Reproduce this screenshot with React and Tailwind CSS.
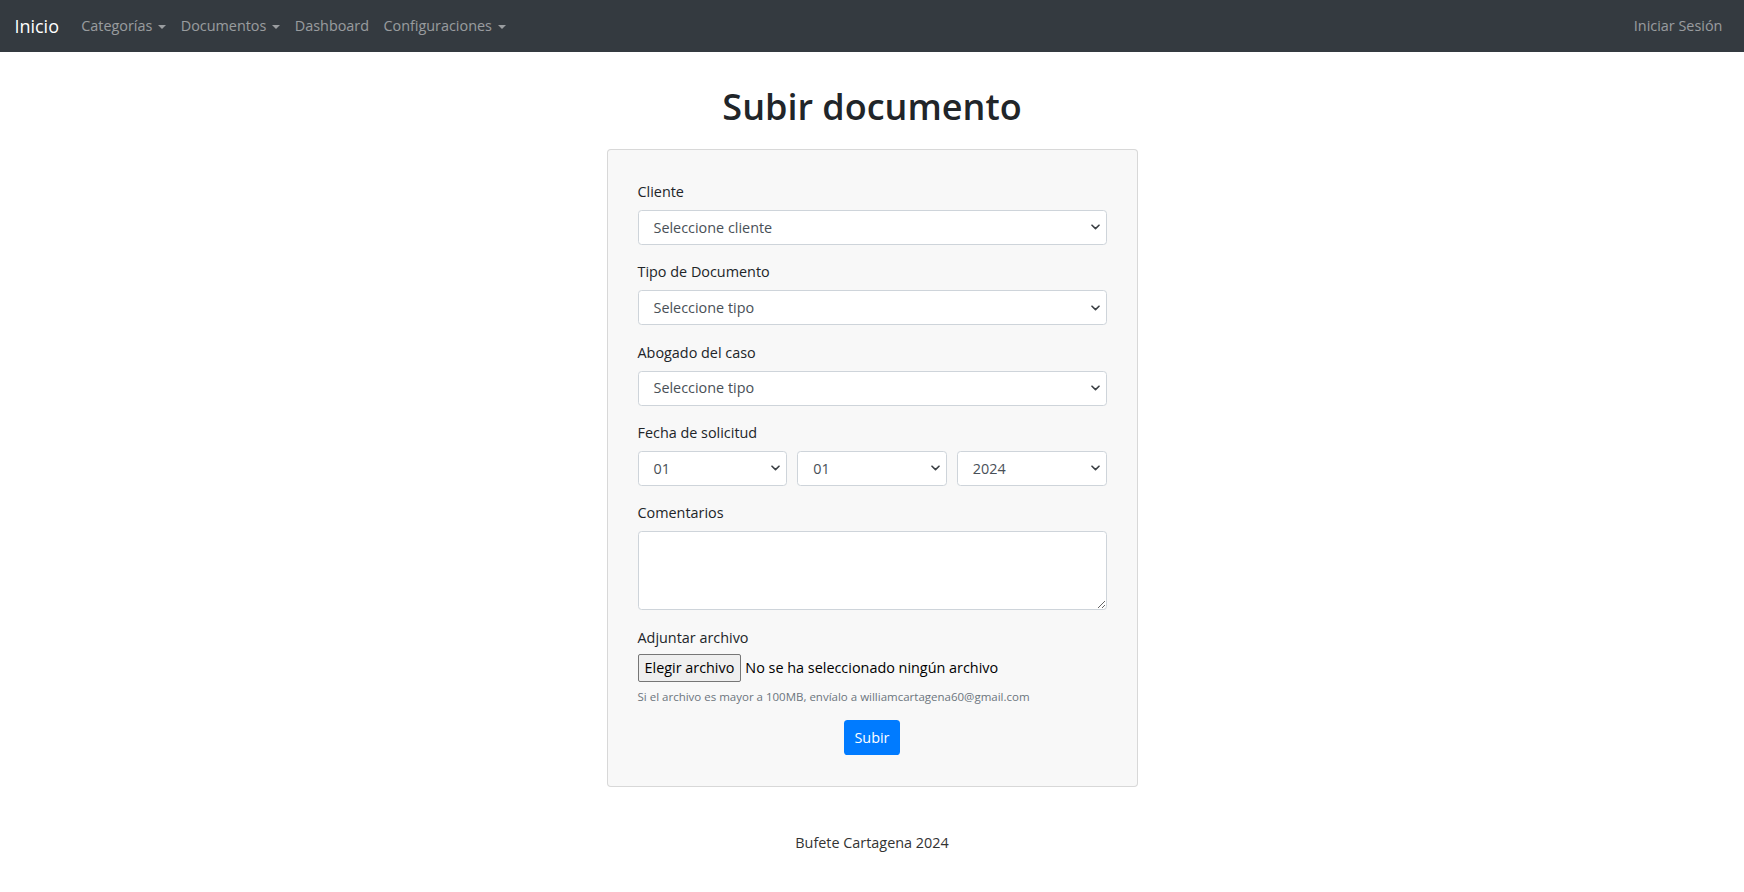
import React from "react";

function Caret() {
  return (
    <span className="inline-block w-0 h-0 ml-[6px] border-x-[4.3px] border-x-transparent border-t-[4.3px] border-t-current align-[2px]" />
  );
}

function Chevron() {
  return (
    <svg width="9" height="6" viewBox="0 0 9 6" className="shrink-0">
      <path d="M1 1.2 L4.5 4.6 L8 1.2" fill="none" stroke="#3c4045" strokeWidth="1.6" strokeLinecap="round" strokeLinejoin="round" />
    </svg>
  );
}

function FakeSelect({ value, className = "" }) {
  return (
    <div className={"h-[35px] bg-white border border-[#ced4da] rounded-[3.6px] flex items-center justify-between pl-[15px] pr-[6px] text-[#495057] " + className}>
      <span>{value}</span>
      <Chevron />
    </div>
  );
}

function Label({ children }) {
  return <div className="leading-[21.6px] mb-[7.2px]">{children}</div>;
}

export default function App() {
  const links = [
    { t: "Categorías", c: true },
    { t: "Documentos", c: true },
    { t: "Dashboard", c: false },
    { t: "Configuraciones", c: true },
  ];
  return (
    <div className="min-h-screen bg-white font-['Open_Sans',sans-serif] text-[14.4px] leading-[1.5] text-[#212529]">
      <nav className="h-[52px] bg-[#343a40] flex items-center justify-between px-[14.4px]">
        <div className="flex items-center">
          <a className="text-[18px] text-white mr-[15px] leading-[27px]">Inicio</a>
          <ul className="flex items-center">
            {links.map((l) => (
              <li key={l.t} className="px-[7.2px] text-[rgba(255,255,255,0.5)]">
                {l.t}
                {l.c && <Caret />}
              </li>
            ))}
          </ul>
        </div>
        <a className="px-[7.2px] text-[rgba(255,255,255,0.5)]">Iniciar Sesión</a>
      </nav>
      <main className="flex flex-col items-center">
        <h1 className="mt-[33px] mb-[21px] text-[36px] leading-[1.2] font-[550]">Subir documento</h1>
        <div className="w-[531px] bg-[#f8f8f8] border border-[rgba(0,0,0,0.13)] rounded-[4px] px-[30px] pt-[31px] pb-[31px]">
          <div className="mb-[16.5px]">
            <Label>Cliente</Label>
            <FakeSelect value="Seleccione cliente" />
          </div>
          <div className="mb-[16.5px]">
            <Label>Tipo de Documento</Label>
            <FakeSelect value="Seleccione tipo" />
          </div>
          <div className="mb-[16.5px]">
            <Label>Abogado del caso</Label>
            <FakeSelect value="Seleccione tipo" />
          </div>
          <div className="mb-[16.5px]">
            <Label>Fecha de solicitud</Label>
            <div className="grid grid-cols-3 gap-[10px]">
              <FakeSelect value="01" />
              <FakeSelect value="01" />
              <FakeSelect value="2024" />
            </div>
          </div>
          <div className="mb-[16.5px]">
            <Label>Comentarios</Label>
            <textarea className="block w-full h-[79px] bg-white border border-[#ced4da] rounded-[3.6px] outline-none" />
          </div>
          <div className="mb-[15px]">
            <div className="leading-[21.6px] mb-[6px]">Adjuntar archivo</div>
            <div className="flex items-center h-[28px]">
              <span className="h-[28px] flex items-center px-[6px] bg-[#efefef] border border-[#767676] rounded-[2px] text-black">Elegir archivo</span>
              <span className="ml-[4px] text-black">No se ha seleccionado ningún archivo</span>
            </div>
            <div className="mt-[6px] text-[11.5px] leading-[17px] text-[#6c757d]">
              Si el archivo es mayor a 100MB, envíalo a williamcartagena60@gmail.com
            </div>
          </div>
          <div className="flex justify-center">
            <button className="h-[35px] px-[10.8px] bg-[#007bff] text-white rounded-[3.6px]">Subir</button>
          </div>
        </div>
        <footer className="mt-[45px] leading-[21.6px] text-[#333]">Bufete Cartagena 2024</footer>
      </main>
    </div>
  );
}
